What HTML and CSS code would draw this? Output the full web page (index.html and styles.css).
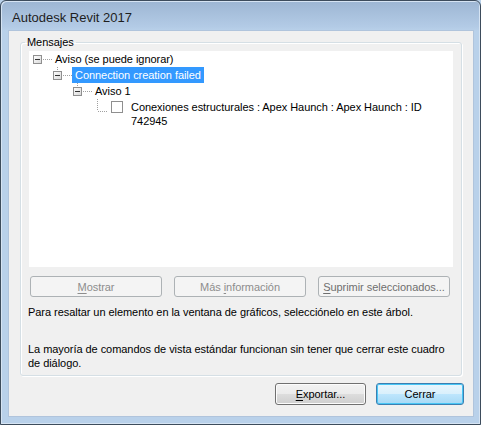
FILE: index.html
```html
<!DOCTYPE html>
<html>
<head>
  <title>Autodesk Revit 2017</title>
  <link rel="stylesheet" href="styles.css">
</head>
<body>
  <div class="window">
    <div class="titlebar">Autodesk Revit 2017</div>
    <div class="client">
      <fieldset class="group">
        <legend>Mensajes</legend>

        <div class="tree">
          <div class="row lvl0">
            <svg class="glyph" width="23" height="16">
              <rect x="4.5" y="4.5" width="8" height="8" fill="url(#boxfill)" stroke="#8f8f8f"/>
              <line x1="6" y1="8.5" x2="11" y2="8.5" stroke="#333"/>
              <line x1="14" y1="8.5" x2="23" y2="8.5" class="dots"/>
            </svg>
            <span class="label">Aviso (se puede ignorar)</span>
          </div>
          <div class="row lvl1">
            <svg class="glyph" width="23" height="16">
              <line x1="8.5" y1="0" x2="8.5" y2="4" class="dots"/>
              <rect x="4.5" y="4.5" width="8" height="8" fill="url(#boxfill)" stroke="#8f8f8f"/>
              <line x1="6" y1="8.5" x2="11" y2="8.5" stroke="#333"/>
              <line x1="14" y1="8.5" x2="23" y2="8.5" class="dots"/>
            </svg>
            <span class="label selected">Connection creation failed</span>
          </div>
          <div class="row lvl2">
            <svg class="glyph" width="23" height="16">
              <line x1="8.5" y1="0" x2="8.5" y2="4" class="dots"/>
              <rect x="4.5" y="4.5" width="8" height="8" fill="url(#boxfill)" stroke="#8f8f8f"/>
              <line x1="6" y1="8.5" x2="11" y2="8.5" stroke="#333"/>
              <line x1="14" y1="8.5" x2="23" y2="8.5" class="dots"/>
            </svg>
            <span class="label">Aviso 1</span>
          </div>
          <div class="row lvl3">
            <svg class="glyph" width="39" height="16">
              <line x1="8.5" y1="0" x2="8.5" y2="12" class="dots"/>
              <line x1="9" y1="12.5" x2="19" y2="12.5" class="dots"/>
              <rect x="22.5" y="2.5" width="11" height="11" fill="#fff" stroke="#8f8f8f"/>
            </svg>
            <span class="label multi">Conexiones estructurales : Apex Haunch : Apex Haunch : ID<br>742945</span>
          </div>
        </div>

        <div class="tree-buttons">
          <button class="btn" disabled><u>M</u>ostrar</button>
          <button class="btn" disabled>Más <u>i</u>nformación</button>
          <button class="btn darker" disabled><u>S</u>uprimir seleccionados...</button>
        </div>

        <p class="hint">Para resaltar un elemento en la ventana de gráficos, selecciónelo en este árbol.</p>
        <p class="hint second">La mayoría de comandos de vista estándar funcionan sin tener que cerrar este cuadro<br>de diálogo.</p>
      </fieldset>

      <div class="footer">
        <button class="btn normal export"><u>E</u>xportar...</button>
        <button class="btn default close">Cerrar</button>
      </div>
    </div>
  </div>

  <svg width="0" height="0" class="defs">
    <defs>
      <linearGradient id="boxfill" x1="0" y1="0" x2="1" y2="1">
        <stop offset="0" stop-color="#ffffff"/>
        <stop offset="1" stop-color="#d8d8d8"/>
      </linearGradient>
    </defs>
  </svg>
</body>
</html>
```

FILE: styles.css
```css
html, body {
  margin: 0;
  padding: 0;
  background-color: #b9d1ea;
}
body {
  font-family: "Liberation Sans", Arial, sans-serif;
  font-size: 11px;
  letter-spacing: -0.05px;
  color: #000;
}

.window {
  width: 481px;
  height: 425px;
  box-sizing: border-box;
  border: 1px solid #3d4c5c;
  border-radius: 6px 6px 0 0;
  background: linear-gradient(to bottom, #9db6d3 0px, #b3cbe6 26px, #b9d1ea 30px, #b9d1ea 100%);
  box-shadow: inset 1px 1px 0 #d6e4f3, inset -1px -1px 0 #d6e4f3;
  padding: 0 6px 6px 7px;
}

.titlebar {
  height: 29px;
  line-height: 34px;
  padding-left: 4px;
  font-size: 13px;
  letter-spacing: 0;
  color: #1e1e1e;
}

.client {
  height: 387px;
  box-sizing: border-box;
  background-color: #f0f0f0;
  border: 1px solid #b0c4dc;
  padding: 4px 9px 0 11px;
}

.group {
  margin: 0;
  border: 1px solid #d5dfe5;
  border-radius: 3px;
  box-shadow: inset 1px 1px 0 #fff, 1px 1px 0 #fff;
  padding: 0 8px 5px 8px;
  width: 442px;
  box-sizing: border-box;
}
.group legend {
  padding: 0 2px;
  margin-left: -4px;
  line-height: 15px;
}

.tree {
  margin-top: 1px;
  height: 216px;
  background-color: #fff;
}
.row {
  display: flex;
  align-items: flex-start;
  height: 16px;
  line-height: 16px;
  white-space: nowrap;
}
.lvl1 { padding-left: 20px; }
.lvl2 { padding-left: 40px; }
.lvl3 { padding-left: 60px; height: 30px; }
.glyph {
  display: block;
  flex: none;
}
.dots {
  stroke: #a0a0a0;
  stroke-width: 1;
  stroke-dasharray: 1 1;
  shape-rendering: crispEdges;
}
.label {
  padding: 0 3px;
}
.label.selected {
  background-color: #3399ff;
  color: #fff;
}
.label.multi {
  line-height: 14px;
  padding-top: 1px;
}

.tree-buttons {
  display: flex;
  gap: 12px;
  margin: 9px 0 0 1px;
}
.btn {
  font-family: inherit;
  font-size: 11px;
  letter-spacing: inherit;
  height: 21px;
  padding: 0;
  border-radius: 3px;
  box-sizing: border-box;
  white-space: nowrap;
}
.btn u {
  text-decoration-thickness: 1px;
  text-underline-offset: 2px;
}
.tree-buttons .btn {
  width: 132px;
}
.btn[disabled] {
  border: 1px solid #adb2b5;
  background-color: #f4f4f4;
  color: #8d8d8d;
}
.btn.darker {
  color: #6f6f6f;
}

.hint {
  margin: 8px 0 0 -1px;
  line-height: 14px;
  white-space: nowrap;
}
.hint.second {
  margin-top: 23px;
}

.footer {
  display: flex;
  justify-content: flex-end;
  gap: 10px;
  margin-top: 7px;
}
.btn.normal {
  width: 91px;
  height: 22px;
  border: 1px solid #707070;
  background: linear-gradient(to bottom, #f2f2f2 0%, #ebebeb 50%, #dddddd 50%, #cfcfcf 100%);
  box-shadow: inset 0 0 0 1px #fcfcfc;
  color: #000;
}
.btn.default {
  width: 88px;
  height: 22px;
  border: 1px solid #3c7fb1;
  background: linear-gradient(to bottom, #eaf6fd 0%, #d9f0fc 50%, #bee6fd 50%, #a7d9f5 100%);
  box-shadow: inset 0 0 0 1px #48c6f5;
  color: #000;
}

.defs {
  position: absolute;
}
```
